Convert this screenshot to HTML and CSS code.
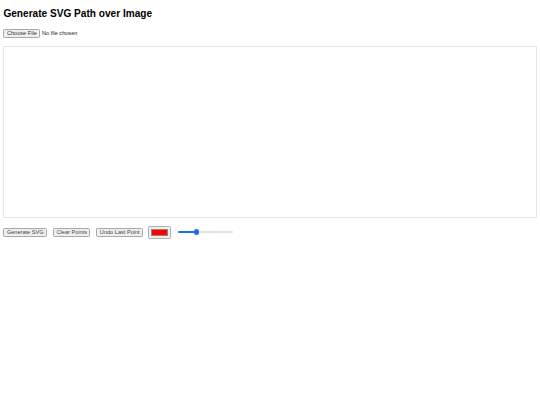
FILE: index.html
```html
<!DOCTYPE html>
<html lang="en">
<head>
<meta charset="utf-8">
<title>Generate SVG Path over Image</title>
<link rel="stylesheet" href="styles.css">
</head>
<body>
<h1 class="title">Generate SVG Path over Image</h1>
<input class="file" type="file" accept="image/*">
<div class="canvas"></div>
<div class="controls">
  <button class="btn" type="button">Generate SVG</button>
  <button class="btn" type="button">Clear Points</button>
  <button class="btn btn-last" type="button">Undo Last Point</button>
  <input class="color" type="color" value="#ff0000">
  <input class="range" type="range" min="1" max="20" value="7">
</div>
</body>
</html>
```
FILE: styles.css
```css
body {
  margin: 3.4px;
  font-family: "Liberation Sans", Arial, sans-serif;
  background: #fff;
  color: #000;
}
.title {
  font-size: 10.1px;
  font-weight: bold;
  margin: 5.1px 0 9.3px;
}
.file {
  display: block;
  font-family: "Liberation Sans", Arial, sans-serif;
  font-size: 5.6px;
  color: #222;
}
.file::file-selector-button {
  font-family: "Liberation Sans", Arial, sans-serif;
  font-size: 5.6px;
  color: #333;
  background: #efefef;
  border: 1px solid #a8a8a8;
  border-radius: 1.3px;
  padding: 0.4px 2.5px;
  margin-right: 1.7px;
}
.canvas {
  box-sizing: border-box;
  margin-top: 8.4px;
  height: 172.5px;
  border: 1px solid #e6e6e6;
}
.controls {
  display: flex;
  align-items: center;
  margin-top: 7.4px;
}
.btn {
  font-family: "Liberation Sans", Arial, sans-serif;
  font-size: 5.6px;
  color: #444;
  background: #efefef;
  border: 1px solid #a8a8a8;
  border-radius: 1.3px;
  padding: 0.4px 2.5px;
  margin: 0 5.9px 0 0;
}
.btn-last {
  margin-right: 5.1px;
}
.color {
  box-sizing: border-box;
  width: 22.8px;
  height: 13.1px;
  margin: 0 7.2px 0 0;
  padding: 1.7px 2px;
  background: #efefef;
  border: 1px solid #b0b0b0;
  border-radius: 1.3px;
}
.color::-webkit-color-swatch-wrapper {
  padding: 0;
}
.color::-webkit-color-swatch {
  border: 0.5px solid #8a8a8a;
  border-radius: 0;
}
.range {
  -webkit-appearance: none;
  appearance: none;
  width: 54.4px;
  height: 6px;
  margin: 0 0 1px;
  background: transparent;
}
.range::-webkit-slider-runnable-track {
  height: 2.6px;
  border-radius: 1.3px;
  background: linear-gradient(to right, #1a73e8 0 34%, #e2e2e2 34% 100%);
}
.range::-webkit-slider-thumb {
  -webkit-appearance: none;
  appearance: none;
  width: 5.8px;
  height: 5.8px;
  margin-top: -1.6px;
  border-radius: 50%;
  background: #1a73e8;
  border: none;
}
```
